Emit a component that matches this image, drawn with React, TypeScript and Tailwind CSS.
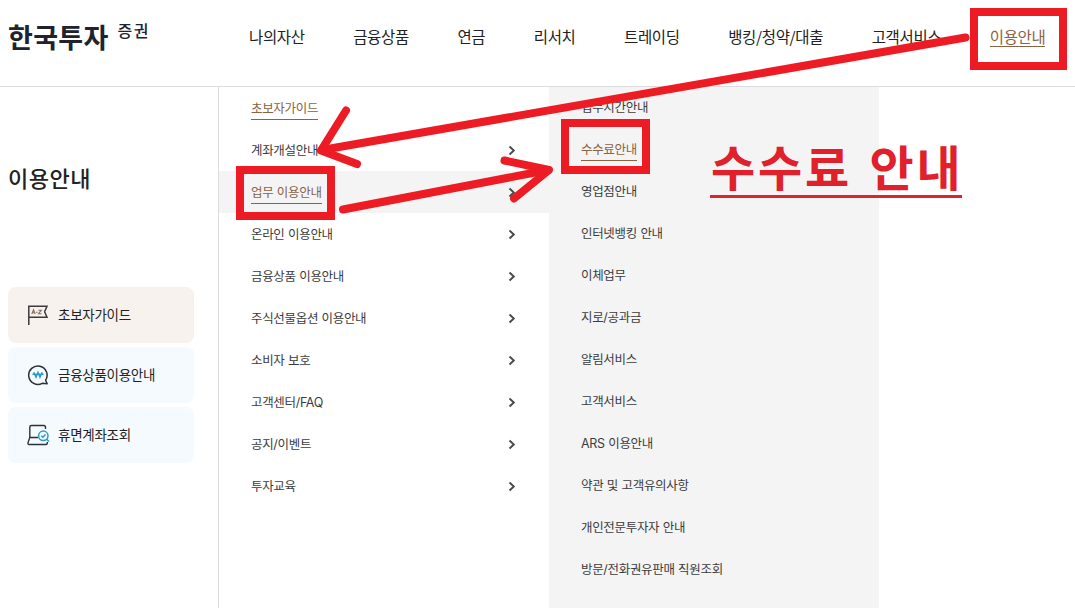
import React from 'react';
import clsx from 'clsx';

interface MenuItem {
    label: string;
    underline?: boolean;
    active?: boolean;
    arrow?: boolean;
}

const navItems = ['나의자산', '금융상품', '연금', '리서치', '트레이딩', '뱅킹/청약/대출', '고객서비스', '이용안내'];

const depthTwo: MenuItem[] = [
    { label: '초보자가이드', underline: true },
    { label: '계좌개설안내', arrow: true },
    { label: '업무 이용안내', underline: true, active: true, arrow: true },
    { label: '온라인 이용안내', arrow: true },
    { label: '금융상품 이용안내', arrow: true },
    { label: '주식선물옵션 이용안내', arrow: true },
    { label: '소비자 보호', arrow: true },
    { label: '고객센터/FAQ', arrow: true },
    { label: '공지/이벤트', arrow: true },
    { label: '투자교육', arrow: true },
];

const depthThree: MenuItem[] = [
    { label: '업무시간안내' },
    { label: '수수료안내', underline: true },
    { label: '영업점안내' },
    { label: '인터넷뱅킹 안내' },
    { label: '이체업무' },
    { label: '지로/공과금' },
    { label: '알림서비스' },
    { label: '고객서비스' },
    { label: 'ARS 이용안내' },
    { label: '약관 및 고객유의사항' },
    { label: '개인전문투자자 안내' },
    { label: '방문/전화권유판매 직원조회' },
];

const FlagIcon = () => (
    <svg width="22" height="22" viewBox="0 0 22 22" fill="none">
        <path d="M1.800 21V2.300H20L17.600 7.800L20 13.200H2" stroke="#3c3a3c" strokeWidth="1.5" />
        <path d="M4.800 10L6.500 5.800L8.200 10M5.500 8.800H7.500M8.900 8.200H10.600M11.400 6.200H14.400L11.500 9.700H14.600" stroke="#8a6f60" strokeWidth="1.1" />
    </svg>
);

const WonIcon = () => (
    <svg width="22" height="22" viewBox="0 0 22 22" fill="none">
        <path d="M18.600 16.200A9.200 9.200 0 1 0 15.200 19.300L20.200 19.800Z" stroke="#2d3238" strokeWidth="1.5" strokeLinejoin="round" />
        <path d="M6.800 8.200L9 13.200L11 8.400L13 13.200L15.200 8.200M5.500 10.300H16.500" stroke="#2b9cc9" strokeWidth="1.5" />
    </svg>
);

const SearchAccountIcon = () => (
    <svg width="23" height="22" viewBox="0 0 23 22" fill="none">
        <path d="M18.500 5V3.200Q18.500 1.500 16.800 1.500H4.500Q2.800 1.500 2.800 3.200V13.500L1 18.800Q0.700 20.500 2.200 20.500H19Q20.500 20.500 20.300 18M2.800 13.500H11" stroke="#2d3238" strokeWidth="1.4" />
        <circle cx="16.3" cy="11.8" r="4.7" stroke="#2b9cc9" strokeWidth="1.5" />
        <path d="M14.300 11.700L15.900 13.200L18.500 10.400M19.600 15.100L22 17.500" stroke="#2b9cc9" strokeWidth="1.5" />
    </svg>
);

const quickLinks = [
    { label: '초보자가이드', icon: <FlagIcon />, color: 'bg-[#f8f2ee]' },
    { label: '금융상품이용안내', icon: <WonIcon />, color: 'bg-[#f4fafe]' },
    { label: '휴면계좌조회', icon: <SearchAccountIcon />, color: 'bg-[#f4fafe]' },
];

const MenuRow: React.FC<{ item: MenuItem }> = ({ item }) => (
    <li className={clsx('flex h-[42px] items-center justify-between pr-[33px] pl-8', item.active && 'bg-[#f4f4f4]')}>
        <a
            className={clsx(
                "h-6 border-b font-[Inter,'Noto_Sans_CJK_KR',sans-serif] text-[12.5px] leading-[26px] tracking-[-0.32px] [word-spacing:0.3px]",
                item.underline ? 'border-[#8a6244] text-[#8a6244]' : 'border-transparent text-[#3c3c3c]',
            )}
        >
            {item.label}
        </a>
        {item.arrow && (
            <svg width="8" height="11" viewBox="0 0 8 11" fill="none">
                <path d="M1.5 1.500L5.800 5.500L1.500 9.500" stroke="#4a4a4a" strokeWidth="1.9" />
            </svg>
        )}
    </li>
);

const Annotations = () => (
    <div className="pointer-events-none absolute inset-0">
        <svg className="absolute inset-0" width="1075" height="608" fill="none" stroke="#ed1c24" strokeWidth="8">
            <rect x="974" y="12" width="89" height="54" />
            <rect x="240" y="170" width="91" height="46" />
            <rect x="565" y="123" width="81" height="47" />
            <g strokeLinecap="round" strokeLinejoin="round">
                <path d="M965.5 37.5L322 150" />
                <path d="M346 110.5L321 150.5L357 164" />
                <path d="M343 209.5L548 170" />
                <path d="M504.500 160.500L549 170L514 198.500" />
            </g>
        </svg>
        <div className="absolute top-[134px] left-[710px] h-[64px] w-[252px] border-b-[3px] border-[#dc2430] pl-px text-[48px] leading-[62px] font-bold tracking-[2.8px] whitespace-nowrap text-[#e0202b] [word-spacing:4px]">
            수수료 안내
        </div>
    </div>
);

export default function App() {
    return (
        <div className="relative flex h-[608px] w-[1075px] flex-col overflow-hidden bg-white font-['Noto_Sans_CJK_KR',sans-serif] whitespace-nowrap text-[#222]">
            <header className="flex h-[87px] shrink-0 border-b border-[#dcdcdc]">
                <div className="flex w-[249px] shrink-0 items-start pl-2 text-[#20222e]">
                    <span className="mt-[17px] text-[27px] leading-[40px] font-bold tracking-[0.3px]">한국투자</span>
                    <span className="mt-[18px] ml-[9px] text-[16px] leading-6 font-medium tracking-[1.5px]">증권</span>
                </div>
                <nav className="flex items-start gap-[48.500px] pt-[26px]">
                    {navItems.map((item) => (
                        <a
                            key={item}
                            className={clsx(
                                'h-[21px] border-b text-[15.5px] leading-[20px] tracking-[-0.34px]',
                                item === '이용안내' ? 'border-[#8a6244] text-[#8a6244]' : 'border-transparent',
                            )}
                        >
                            {item}
                        </a>
                    ))}
                </nav>
            </header>
            <main className="flex flex-1">
                <aside className="w-[219px] shrink-0 border-r border-[#dcdcdc] pl-2">
                    <h2 className="pt-[74px] text-[22px] leading-8 font-medium tracking-[0.5px]">이용안내</h2>
                    <div className="mt-[94px] flex w-[186px] flex-col gap-1">
                        {quickLinks.map((link) => (
                            <a key={link.label} className={clsx('flex h-14 items-center rounded-lg pl-[19px] text-[13.5px] tracking-[-0.28px]', link.color)}>
                                <span className="w-[31px]">{link.icon}</span>
                                <span className="-mt-0.5">{link.label}</span>
                            </a>
                        ))}
                    </div>
                </aside>
                <ul className="w-[330px] shrink-0">
                    {depthTwo.map((item) => (
                        <MenuRow key={item.label} item={item} />
                    ))}
                </ul>
                <ul className="-mt-px w-[330px] shrink-0 border-t border-[#dcdcdc] bg-[#f4f4f4]">
                    <div className="-mt-px">
                        {depthThree.map((item) => (
                            <MenuRow key={item.label} item={item} />
                        ))}
                    </div>
                </ul>
            </main>
            <Annotations />
        </div>
    );
}
